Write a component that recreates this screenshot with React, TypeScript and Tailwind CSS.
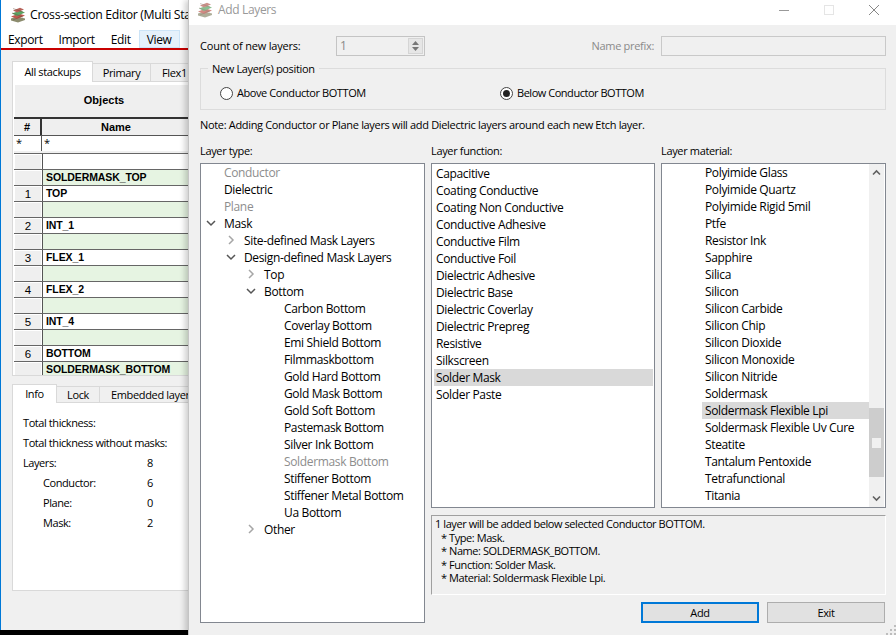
const Logo = ({ className = "" }: { className?: string }) => (
  <svg viewBox="0 0 16 16" width="16" height="16" className={`shrink-0 ${className}`}>
    <path d="M1 11.5 L7 9.5 L15 11.5 L15 13 L8 15.5 L1 13.5Z" fill="#8c8c6e" />
    <path d="M1 9.5 L9 6.5 L15 8.5 L7 12Z" fill="#c0594f" />
    <path d="M2 6.5 L10 3.5 L15 5.5 L7 9Z" fill="#5aa564" />
    <path d="M3 3.5 L10 .8 L14 2.5 L7 5.5Z" fill="#b8635a" />
    <path d="M3 1.5 L13 5 M2 6 L13 10 M3 13 L12 9" stroke="#6a4a3a" strokeWidth=".7" opacity=".6" />
  </svg>
);

const Chevron = ({ open }: { open?: boolean }) => (
  <svg viewBox="0 0 10 10" width="10" height="10" className="shrink-0">
    {open ? (
      <path d="M1 3 L5 7 L9 3" fill="none" stroke="#555" strokeWidth="1.5" />
    ) : (
      <path d="M3 1 L7 5 L3 9" fill="none" stroke="#a6a6a6" strokeWidth="1.5" />
    )}
  </svg>
);

type TreeItem = { t: string; d: number; c?: "o" | "c"; dim?: boolean };
const tree: TreeItem[] = [
  { t: "Conductor", d: 1, dim: true },
  { t: "Dielectric", d: 1 },
  { t: "Plane", d: 1, dim: true },
  { t: "Mask", d: 1, c: "o" },
  { t: "Site-defined Mask Layers", d: 2, c: "c" },
  { t: "Design-defined Mask Layers", d: 2, c: "o" },
  { t: "Top", d: 3, c: "c" },
  { t: "Bottom", d: 3, c: "o" },
  { t: "Carbon Bottom", d: 4 },
  { t: "Coverlay Bottom", d: 4 },
  { t: "Emi Shield Bottom", d: 4 },
  { t: "Filmmaskbottom", d: 4 },
  { t: "Gold Hard Bottom", d: 4 },
  { t: "Gold Mask Bottom", d: 4 },
  { t: "Gold Soft Bottom", d: 4 },
  { t: "Pastemask Bottom", d: 4 },
  { t: "Silver Ink Bottom", d: 4 },
  { t: "Soldermask Bottom", d: 4, dim: true },
  { t: "Stiffener Bottom", d: 4 },
  { t: "Stiffener Metal Bottom", d: 4 },
  { t: "Ua Bottom", d: 4 },
  { t: "Other", d: 3, c: "c" },
];

const functions = [
  "Capacitive", "Coating Conductive", "Coating Non Conductive", "Conductive Adhesive", "Conductive Film",
  "Conductive Foil", "Dielectric Adhesive", "Dielectric Base", "Dielectric Coverlay", "Dielectric Prepreg",
  "Resistive", "Silkscreen", "Solder Mask", "Solder Paste",
];

const materials = [
  "Polyimide Glass", "Polyimide Quartz", "Polyimide Rigid 5mil", "Ptfe", "Resistor Ink", "Sapphire", "Silica",
  "Silicon", "Silicon Carbide", "Silicon Chip", "Silicon Dioxide", "Silicon Monoxide", "Silicon Nitride",
  "Soldermask", "Soldermask Flexible Lpi", "Soldermask Flexible Uv Cure", "Steatite", "Tantalum Pentoxide",
  "Tetrafunctional", "Titania",
];

const rows: { n: string; name: string; green?: boolean }[] = [
  { n: "", name: "" },
  { n: "", name: "SOLDERMASK_TOP", green: true },
  { n: "1", name: "TOP" },
  { n: "", name: "", green: true },
  { n: "2", name: "INT_1" },
  { n: "", name: "", green: true },
  { n: "3", name: "FLEX_1" },
  { n: "", name: "", green: true },
  { n: "4", name: "FLEX_2" },
  { n: "", name: "", green: true },
  { n: "5", name: "INT_4" },
  { n: "", name: "", green: true },
  { n: "6", name: "BOTTOM" },
  { n: "", name: "SOLDERMASK_BOTTOM", green: true },
];

const treePad: Record<number, string> = { 1: "pl-[23px]", 2: "pl-[43px]", 3: "pl-[63px]", 4: "pl-[83px]" };
const chevPos: Record<number, string> = { 1: "left-[5px]", 2: "left-[25px]", 3: "left-[45px]" };

export default function App() {
  return (
    <div className="relative w-[896px] h-[635px] overflow-hidden bg-black text-[12px] text-black font-['Open_Sans',sans-serif] tracking-[-0.35px]">
      {/* Background window */}
      <div className="absolute left-0 top-0 w-[189px] h-[630px] bg-[#f0f0f0] border-l border-[#0078d7] flex flex-col overflow-hidden">
        <div className="h-[30px] bg-white flex items-center shrink-0 pl-[9px] gap-[4px] text-[12.3px] whitespace-nowrap">
          <Logo />
          <span>Cross-section Editor (Multi Stackup)</span>
        </div>
        <div className="h-[20px] bg-white border-b-2 border-[#c80000] flex shrink-0 whitespace-nowrap text-[12px]">
          <span className="shrink-0 pl-[7px] pr-[8px] leading-[19px]">Export</span>
          <span className="shrink-0 px-[8px] leading-[19px]">Import</span>
          <span className="shrink-0 px-[8px] leading-[19px]">Edit</span>
          <span className="shrink-0 w-[41px] text-center leading-[17px] h-[18px] bg-[#e5f1fb] border border-[#cce4f7]">View</span>
          <span className="shrink-0 px-[8px] leading-[19px]">Help</span>
        </div>
        <div className="pl-[11px] pt-[11px] flex flex-col w-[300px] shrink-0 text-[11px]">
          <div className="flex h-[21px] items-end">
            <span className="w-[81px] h-[21px] bg-white border border-b-0 border-[#d9d9d9] text-center leading-[19px]">All stackups</span>
            <span className="w-[58px] h-[19px] bg-[#f0f0f0] border border-l-0 border-[#d9d9d9] text-center leading-[18px]">Primary</span>
            <span className="w-[60px] h-[19px] bg-[#f0f0f0] border border-l-0 border-[#d9d9d9] pl-[11px] leading-[18px]">Flex1</span>
          </div>
          <div className="h-[294px] bg-white border border-[#d9d9d9] border-t-0 pl-[1px] pt-[2px] overflow-hidden">
            <div className="h-[33px] bg-[#efefef] border-t border-l border-white font-['Liberation_Sans',sans-serif] font-bold text-[11px] tracking-normal text-center leading-[30px] w-[178px] pl-[1px]">Objects</div>
            <div className="flex h-[18px] border-t-2 border-[#333] bg-[#efefef] font-['Liberation_Sans',sans-serif] font-bold text-[11px] tracking-normal">
              <span className="w-[28px] border-r-2 border-[#333] text-center leading-[16px]">#</span>
              <span className="w-[148px] text-center leading-[16px]">Name</span>
            </div>
            <div className="flex h-[16px] bg-white text-[11px] leading-[14px] border-t border-[#555]">
              <span className="w-[28px] pl-[2px] border-r border-[#555]">*</span>
              <span className="pl-[2px]">*</span>
            </div>
            <div className="h-[2px] bg-[#f0f0f0]" />
            {rows.map((r, i) => (
              <div key={i} className="flex h-[16px] border-t border-[#666] font-['Liberation_Sans',sans-serif] text-[10.5px] tracking-[-0.1px]">
                <span className="w-[27px] shrink-0 bg-[#efefef] border-t border-l border-white text-center leading-[14px] font-normal mr-[1px] text-[11.5px]">{r.n}</span>
                <span className={`flex-1 pl-[3px] border-l border-[#555] font-bold leading-[15px] ${r.green ? "bg-[#e6f4e2]" : "bg-white"}`}>{r.name}</span>
              </div>
            ))}
          </div>
          <div className="flex h-[19px] items-end mt-[8px]">
            <span className="w-[45px] h-[19px] bg-white border border-b-0 border-[#d9d9d9] text-center leading-[18px]">Info</span>
            <span className="w-[43px] h-[17px] border border-l-0 border-[#d9d9d9] text-center leading-[16px]">Lock</span>
            <span className="w-[100px] h-[17px] border border-l-0 border-[#d9d9d9] pl-[11px] leading-[16px] whitespace-nowrap overflow-hidden">Embedded layers</span>
          </div>
          <div className="h-[188px] bg-white border border-[#d9d9d9] border-t-0 pl-[10px] pt-[10px] flex flex-col leading-[20px] whitespace-nowrap tracking-[-0.42px]">
            <div>Total thickness:</div>
            <div>Total thickness without masks:</div>
            <div className="flex"><span className="w-[124px]">Layers:</span><span>8</span></div>
            <div className="flex pl-[20px]"><span className="w-[104px]">Conductor:</span><span>6</span></div>
            <div className="flex pl-[20px]"><span className="w-[104px]">Plane:</span><span>0</span></div>
            <div className="flex pl-[20px]"><span className="w-[104px]">Mask:</span><span>2</span></div>
          </div>
        </div>
      </div>

      {/* Add Layers dialog */}
      <div className="absolute left-[188px] top-0 w-[708px] h-[635px] bg-[#f0f0f0] border-l border-[#c4c4c4] flex flex-col shadow-[-3px_0_6px_rgba(0,0,0,0.2)]">
        <div className="h-[25px] bg-white shrink-0 pl-[8px] pt-[1px]">
          <div className="h-[18px] flex items-center gap-[5px]">
            <Logo className="opacity-70" />
            <span className="text-[#999] text-[12px]">Add Layers</span>
            <div className="ml-auto flex items-center">
              <span className="w-[45px] flex justify-center">
                <svg width="10" height="10" viewBox="0 0 10 10"><path d="M0 5.5H10" stroke="#999" /></svg>
              </span>
              <span className="w-[46px] flex justify-center">
                <svg width="10" height="10" viewBox="0 0 10 10"><rect x=".5" y=".5" width="9" height="9" fill="none" stroke="#e5e5e5" /></svg>
              </span>
              <span className="w-[44px] flex justify-center">
                <svg width="10" height="10" viewBox="0 0 10 10"><path d="M0 0L10 10M10 0L0 10" stroke="#888" /></svg>
              </span>
            </div>
          </div>
        </div>

        <div className="relative flex-1 flex flex-col pl-[11px] pr-[10px] pt-[11px] text-[11px]">
          <div className="flex items-center h-[20px]">
            <span className="w-[136px] tracking-[-0.2px]">Count of new layers:</span>
            <div className="w-[89px] h-[20px] border border-[#c4c4c4] flex items-center pl-[3px] text-[#8a8a8a] text-[12px]">
              1
              <div className="ml-auto mr-[1px] w-[15px] h-[16px] flex flex-col items-center justify-center gap-[2px] bg-[#e6e6e6] border border-[#d5d5d5]">
                <svg width="7" height="4" viewBox="0 0 7 4"><path d="M0 4L3.5 0L7 4Z" fill="#777" /></svg>
                <svg width="7" height="4" viewBox="0 0 7 4"><path d="M0 0L3.5 4L7 0Z" fill="#777" /></svg>
              </div>
            </div>
            <span className="ml-auto mr-[7px] text-[#8a8a8a] tracking-[-0.3px]">Name prefix:</span>
            <div className="w-[225px] h-[20px] border border-[#c9c9c9]" />
          </div>

          <div className="relative mt-[12px] h-[42px] border border-[#dcdcdc] flex items-center pl-[19px] pt-[9px]">
            <span className="absolute left-[7px] top-[-8px] bg-[#f0f0f0] px-[4px] leading-[16px]">New Layer(s) position</span>
            <div className="flex items-center gap-[4px] w-[280px] tracking-[-0.42px]">
              <span className="w-[13px] h-[13px] rounded-full border border-[#444] bg-white" />
              <span>Above Conductor BOTTOM</span>
            </div>
            <div className="flex items-center gap-[4px] tracking-[-0.47px]">
              <span className="w-[13px] h-[13px] rounded-full border border-[#444] bg-white flex items-center justify-center">
                <span className="w-[7px] h-[7px] rounded-full bg-[#222]" />
              </span>
              <span>Below Conductor BOTTOM</span>
            </div>
          </div>

          <div className="mt-[7px] leading-[16px] tracking-[-0.33px]">Note: Adding Conductor or Plane layers will add Dielectric layers around each new Etch layer.</div>

          <div className="flex-1 grid grid-cols-[225px_224px_225px] gap-x-[6px] mt-[10px] grid-rows-[16px_1fr] text-[12px]">
            <span className="leading-[16px] text-[11px]">Layer type:</span>
            <span className="leading-[16px] text-[11px]">Layer function:</span>
            <span className="leading-[16px] text-[11px]">Layer material:</span>

            <div className="mt-[4px] h-[460px] bg-white border border-[#828790] overflow-hidden">
              {tree.map((it) => (
                <div key={it.t} className={`relative h-[17px] leading-[17px] ${treePad[it.d]} ${it.dim ? "text-[#8d8d8d]" : ""}`}>
                  {it.c && (
                    <span className={`absolute top-[3px] ${chevPos[it.d]}`}>
                      <Chevron open={it.c === "o"} />
                    </span>
                  )}
                  {it.t}
                </div>
              ))}
            </div>

            <div className="col-span-2 flex flex-col mt-[4px]">
              <div className="grid grid-cols-[224px_225px] gap-x-[6px] h-[345px]">
                <div className="bg-white border border-[#828790] pt-[1px] pl-[2px] pr-[1px]">
                  {functions.map((f) => (
                    <div key={f} className={`h-[17px] leading-[17px] pl-[2px] ${f === "Solder Mask" ? "bg-[#d9d9d9]" : ""}`}>{f}</div>
                  ))}
                </div>
                <div className="bg-white border border-[#828790] flex overflow-hidden">
                  <div className="flex-1 pl-[40px]">
                    {materials.map((m) => (
                      <div key={m} className={`h-[17px] leading-[17px] pl-[3px] ${m === "Soldermask Flexible Lpi" ? "bg-[#d9d9d9]" : ""}`}>{m}</div>
                    ))}
                  </div>
                  <div className="w-[15px] mr-[1px] bg-[#f0f0f0] flex flex-col shrink-0">
                    <div className="h-[17px] flex items-center justify-center">
                      <svg width="9" height="7" viewBox="0 0 9 7"><path d="M1 5.5L4.5 2L8 5.5" fill="none" stroke="#606060" strokeWidth="1.6" /></svg>
                    </div>
                    <div className="h-[227px]" />
                    <div className="h-[69px] bg-[#cdcdcd] flex items-center justify-center">
                      <span className="w-[9px] h-[10px] bg-[#f0f0f0]" />
                    </div>
                    <div className="mt-auto h-[17px] flex items-center justify-center">
                      <svg width="9" height="7" viewBox="0 0 9 7"><path d="M1 1.5L4.5 5L8 1.5" fill="none" stroke="#606060" strokeWidth="1.6" /></svg>
                    </div>
                  </div>
                </div>
              </div>
              <div className="mt-[7px] h-[80px] border border-t-[#a0a0a0] border-l-[#a0a0a0] border-r-white border-b-white pl-[3px] pt-[1px] text-[11px] tracking-[-0.43px] flex flex-col">
                <div className="leading-[13.5px]">1 layer will be added below selected Conductor BOTTOM.</div>
                <div className="pl-[6px] leading-[13.5px]">* Type: Mask.</div>
                <div className="pl-[6px] leading-[13.5px]">* Name: SOLDERMASK_BOTTOM.</div>
                <div className="pl-[6px] leading-[13.5px]">* Function: Solder Mask.</div>
                <div className="pl-[6px] leading-[13.5px]">* Material: Soldermask Flexible Lpi.</div>
              </div>
              <div className="flex justify-end gap-[8px] mt-[7px] pr-[1px] text-[11px]">
                <button className="w-[118px] h-[21px] bg-[#e1e1e1] border-2 border-[#0078d7] leading-[16px]">Add</button>
                <button className="w-[118px] h-[21px] bg-[#e1e1e1] border border-[#adadad] leading-[18px]">Exit</button>
              </div>
            </div>
          </div>
          <svg width="10" height="10" viewBox="0 0 10 10" className="absolute right-0 bottom-0">
            <path d="M8 0h2v2H8zM4 4h2v2H4zM8 4h2v2H8zM0 8h2v2H0zM4 8h2v2H4zM8 8h2v2H8z" fill="#bdbdbd" />
          </svg>
        </div>
      </div>
    </div>
  );
}
